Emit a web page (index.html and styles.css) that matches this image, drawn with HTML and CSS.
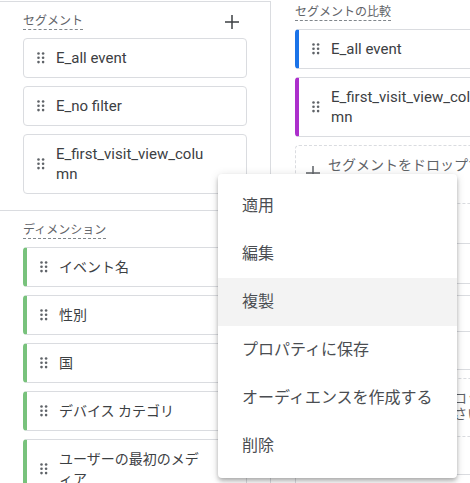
FILE: index.html
```html
<!DOCTYPE html>
<html lang="ja">
<head>
<meta charset="utf-8">
<title>Explore</title>
<link rel="stylesheet" href="styles.css">
</head>
<body>
<div class="page">
  <div class="col-left">
    <section class="sec sec-seg">
      <div class="sec-head">
        <span class="label">セグメント</span>
        <svg class="add" width="24" height="24" viewBox="0 0 24 24"><path d="M19 12.75h-6.25V19h-1.5v-6.25H5v-1.5h6.25V5h1.5v6.25H19z"/></svg>
      </div>
      <div class="list">
        <div class="card"><svg class="handle" width="8" height="12" viewBox="0 0 8 12"><circle cx="1.5" cy="1.5" r="1.3"/><circle cx="6.1" cy="1.5" r="1.3"/><circle cx="1.5" cy="5.8" r="1.3"/><circle cx="6.1" cy="5.8" r="1.3"/><circle cx="1.5" cy="10.1" r="1.3"/><circle cx="6.1" cy="10.1" r="1.3"/></svg><span class="txt">E_all event</span></div>
        <div class="card"><svg class="handle" width="8" height="12" viewBox="0 0 8 12"><circle cx="1.5" cy="1.5" r="1.3"/><circle cx="6.1" cy="1.5" r="1.3"/><circle cx="1.5" cy="5.8" r="1.3"/><circle cx="6.1" cy="5.8" r="1.3"/><circle cx="1.5" cy="10.1" r="1.3"/><circle cx="6.1" cy="10.1" r="1.3"/></svg><span class="txt">E_no filter</span></div>
        <div class="card"><svg class="handle" width="8" height="12" viewBox="0 0 8 12"><circle cx="1.5" cy="1.5" r="1.3"/><circle cx="6.1" cy="1.5" r="1.3"/><circle cx="1.5" cy="5.8" r="1.3"/><circle cx="6.1" cy="5.8" r="1.3"/><circle cx="1.5" cy="10.1" r="1.3"/><circle cx="6.1" cy="10.1" r="1.3"/></svg><span class="txt">E_first_visit_view_column</span></div>
      </div>
    </section>
    <section class="sec sec-dim">
      <div class="sec-head">
        <span class="label">ディメンション</span>
      </div>
      <div class="list">
        <div class="card card-dim"><svg class="handle" width="8" height="12" viewBox="0 0 8 12"><circle cx="1.5" cy="1.5" r="1.3"/><circle cx="6.1" cy="1.5" r="1.3"/><circle cx="1.5" cy="5.8" r="1.3"/><circle cx="6.1" cy="5.8" r="1.3"/><circle cx="1.5" cy="10.1" r="1.3"/><circle cx="6.1" cy="10.1" r="1.3"/></svg><span class="txt">イベント名</span></div>
        <div class="card card-dim"><svg class="handle" width="8" height="12" viewBox="0 0 8 12"><circle cx="1.5" cy="1.5" r="1.3"/><circle cx="6.1" cy="1.5" r="1.3"/><circle cx="1.5" cy="5.8" r="1.3"/><circle cx="6.1" cy="5.8" r="1.3"/><circle cx="1.5" cy="10.1" r="1.3"/><circle cx="6.1" cy="10.1" r="1.3"/></svg><span class="txt">性別</span></div>
        <div class="card card-dim"><svg class="handle" width="8" height="12" viewBox="0 0 8 12"><circle cx="1.5" cy="1.5" r="1.3"/><circle cx="6.1" cy="1.5" r="1.3"/><circle cx="1.5" cy="5.8" r="1.3"/><circle cx="6.1" cy="5.8" r="1.3"/><circle cx="1.5" cy="10.1" r="1.3"/><circle cx="6.1" cy="10.1" r="1.3"/></svg><span class="txt">国</span></div>
        <div class="card card-dim"><svg class="handle" width="8" height="12" viewBox="0 0 8 12"><circle cx="1.5" cy="1.5" r="1.3"/><circle cx="6.1" cy="1.5" r="1.3"/><circle cx="1.5" cy="5.8" r="1.3"/><circle cx="6.1" cy="5.8" r="1.3"/><circle cx="1.5" cy="10.1" r="1.3"/><circle cx="6.1" cy="10.1" r="1.3"/></svg><span class="txt">デバイス カテゴリ</span></div>
        <div class="card card-dim"><svg class="handle" width="8" height="12" viewBox="0 0 8 12"><circle cx="1.5" cy="1.5" r="1.3"/><circle cx="6.1" cy="1.5" r="1.3"/><circle cx="1.5" cy="5.8" r="1.3"/><circle cx="6.1" cy="5.8" r="1.3"/><circle cx="1.5" cy="10.1" r="1.3"/><circle cx="6.1" cy="10.1" r="1.3"/></svg><span class="txt">ユーザーの最初のメディア</span></div>
      </div>
    </section>
  </div>

  <div class="col-right">
    <div class="sec-head">
      <span class="label">セグメントの比較</span>
    </div>
    <div class="list">
      <div class="card card-blue"><svg class="handle" width="8" height="12" viewBox="0 0 8 12"><circle cx="1.5" cy="1.5" r="1.3"/><circle cx="6.1" cy="1.5" r="1.3"/><circle cx="1.5" cy="5.8" r="1.3"/><circle cx="6.1" cy="5.8" r="1.3"/><circle cx="1.5" cy="10.1" r="1.3"/><circle cx="6.1" cy="10.1" r="1.3"/></svg><span class="txt">E_all event</span></div>
      <div class="card card-purple"><svg class="handle" width="8" height="12" viewBox="0 0 8 12"><circle cx="1.5" cy="1.5" r="1.3"/><circle cx="6.1" cy="1.5" r="1.3"/><circle cx="1.5" cy="5.8" r="1.3"/><circle cx="6.1" cy="5.8" r="1.3"/><circle cx="1.5" cy="10.1" r="1.3"/><circle cx="6.1" cy="10.1" r="1.3"/></svg><span class="txt">E_first_visit_view_column</span></div>
      <div class="drop">
        <svg class="drop-add" width="24" height="24" viewBox="0 0 24 24"><path d="M19 12.75h-6.25V19h-1.5v-6.25H5v-1.5h6.25V5h1.5v6.25H19z"/></svg>
        <span class="drop-txt">セグメントをドロップするか選択してください</span>
      </div>
    </div>
    <div class="slot slot-a"></div>
    <div class="slot slot-b"></div>
    <div class="rule"></div>
    <div class="drop drop-dim">
      <svg class="drop-add" width="24" height="24" viewBox="0 0 24 24"><path d="M19 12.75h-6.25V19h-1.5v-6.25H5v-1.5h6.25V5h1.5v6.25H19z"/></svg>
      <span class="drop-txt">ディメンションをドロップするか選択してください</span>
    </div>
    <div class="slot slot-c"></div>
  </div>

  <div class="menu">
    <div class="item">適用</div>
    <div class="item">編集</div>
    <div class="item item-hover">複製</div>
    <div class="item">プロパティに保存</div>
    <div class="item">オーディエンスを作成する</div>
    <div class="item">削除</div>
  </div>
</div>
</body>
</html>
```

FILE: styles.css
```css
* { box-sizing: border-box; }
html, body { margin: 0; padding: 0; background: #ffffff; }
body {
  font-family: Roboto, "Noto Sans CJK JP", sans-serif;
  color: #3c4043;
}
.page {
  position: relative;
  width: 470px;
  height: 483px;
  overflow: hidden;
  display: flex;
  align-items: flex-start;
}
.col-left {
  flex: none;
  width: 271px;
  height: 483px;
  margin-top: 1px;
  border-top: 1px solid #dadce0;
  border-right: 1px solid #dadce0;
}
.sec {
  padding: 11px 23px 16px 23px;
}
.sec-seg { border-bottom: 1px solid #dadce0; }
.sec-head {
  display: flex;
  align-items: center;
  justify-content: space-between;
  height: 17px;
  margin-bottom: 8px;
}
.label {
  font-size: 12px;
  line-height: 16px;
  color: #5f6368;
  border-bottom: 1px dashed #80868b;
}
.add {
  fill: #3c4043;
  margin-right: 3px;
}
.list {
  display: flex;
  flex-direction: column;
  gap: 8px;
}
.card {
  display: flex;
  align-items: center;
  width: 224px;
  background: #fff;
  border: 1px solid #dadce0;
  border-radius: 4px;
  padding: 9px 36px 9px 13px;
}
.handle {
  flex: none;
  fill: #5f6368;
  margin-right: 11px;
}
.txt {
  font-size: 15px;
  line-height: 20px;
  color: #3c4043;
  line-break: anywhere;
  word-break: break-all;
  min-width: 0;
}
.card-dim { border-left: 4px solid #78c27c; }
.card-dim .txt { font-size: 14px; }
.card-blue { border-left: 4px solid #1a73e8; }
.card-purple { border-left: 4px solid #ac2fcc; }

.col-right {
  flex: none;
  width: 260px;
  padding: 4px 0 0 24px;
}
.col-right .sec-head { width: 224px; }
.drop {
  display: flex;
  align-items: center;
  width: 224px;
  border: 1px dashed #dadce0;
  border-radius: 4px;
  padding: 11px 8px 14px 5px;
}
.drop-add {
  flex: none;
  fill: #5f6368;
  margin-right: 3px;
}
.drop-txt {
  width: 175px;
  font-size: 14px;
  line-height: 16px;
  color: #5f6368;
  line-break: anywhere;
}
.slot {
  width: 224px;
  border: 1px solid #dadce0;
  border-radius: 4px;
}
.slot-a { margin-top: 39px; height: 41px; }
.slot-b { margin-top: 11px; height: 37px; }
.rule {
  margin: 37px 0 0 -24px;
  width: 260px;
  border-top: 1px solid #dadce0;
}
.drop-dim { margin-top: 8px; }
.slot-c { margin-top: 37px; height: 40px; }

.menu {
  position: absolute;
  left: 218px;
  top: 174px;
  width: 239px;
  padding: 8px 0;
  background: #fff;
  border-radius: 4px;
  box-shadow: 0 2px 4px -1px rgba(0,0,0,0.2), 0 4px 5px 0 rgba(0,0,0,0.14), 0 1px 10px 0 rgba(0,0,0,0.12);
}
.item {
  height: 48px;
  line-height: 48px;
  padding-left: 24px;
  font-size: 16px;
  color: #4a4d51;
  white-space: nowrap;
}
.item-hover { background: #f3f3f3; }
```
